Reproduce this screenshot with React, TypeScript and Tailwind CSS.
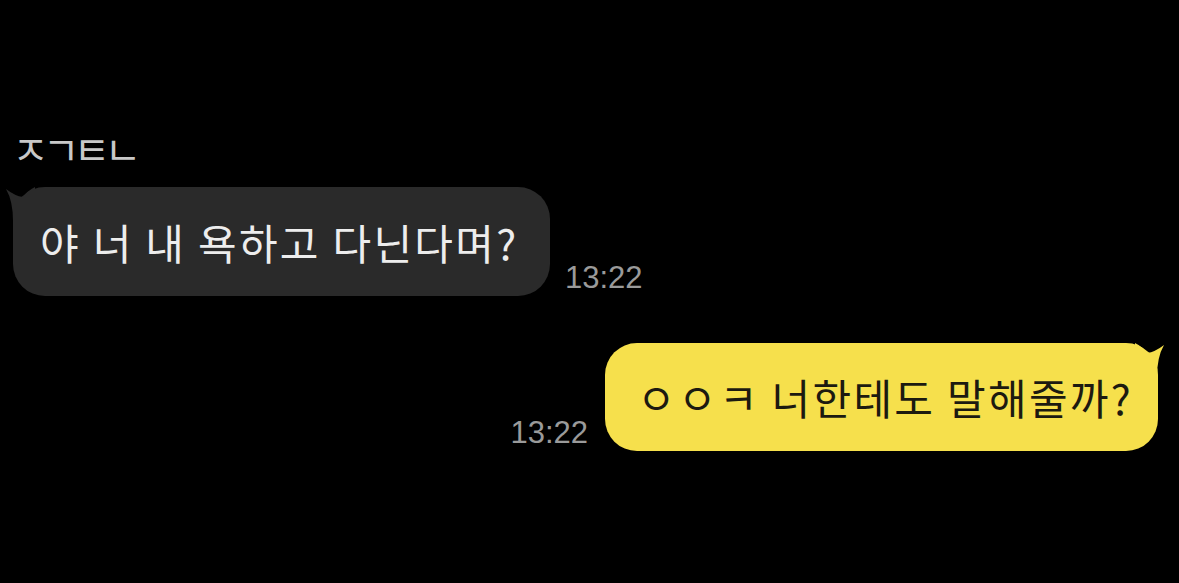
import React from 'react';

const font = { fontFamily: '"Noto Sans CJK KR", "Noto Sans", sans-serif' };

// 말풍선 꼬리 (왼쪽 위)
const TailLeft = ({ color }: { color: string }) => (
  <svg className="absolute -left-[8px] top-0" width="30" height="34" viewBox="0 0 30 34">
    <path d="M1 2 Q10 9 18 10 Q22 4 30 0 L30 34 L8 34 Q8 14 1 2 Z" fill={color} />
  </svg>
);

// 말풍선 꼬리 (오른쪽 위)
const TailRight = ({ color }: { color: string }) => (
  <svg className="absolute -right-[7px] top-0" width="30" height="34" viewBox="0 0 30 34">
    <path d="M29 2 Q20 9 12 10 Q8 4 0 0 L0 34 L22 34 Q22 14 29 2 Z" fill={color} />
  </svg>
);

export default function App() {
  return (
    <div className="h-[583px] w-full bg-black overflow-hidden" style={font}>
      <div className="h-[187px] pl-[12px] flex items-start">
        <div className="mt-[128px] h-[40px] text-[40px] leading-[40px] tracking-[-6px] text-[#c8c8c8]">ㅈㄱㅌㄴ</div>
      </div>

      {/* 받은 메시지 */}
      <div className="pl-[13px] flex items-end gap-[15px]">
        <div className="relative h-[109px] w-[537px] rounded-[32px] bg-[#2a2a2a] flex items-center pl-[27px]">
          <TailLeft color="#2a2a2a" />
          <span className="relative text-[42px] leading-none tracking-[2.3px] text-[#ededed]">야 너 내 욕하고 다닌다며?</span>
        </div>
        <div
          className="pb-[3px] text-[31px] leading-none text-[#9a9a9a]"
          style={{ fontFamily: '"Liberation Sans", sans-serif' }}
        >
          13:22
        </div>
      </div>

      {/* 보낸 메시지 */}
      <div className="mt-[47px] pr-[21px] flex items-end justify-end gap-[17px]">
        <div
          className="pb-[3px] text-[31px] leading-none text-[#9a9a9a]"
          style={{ fontFamily: '"Liberation Sans", sans-serif' }}
        >
          13:22
        </div>
        <div className="relative h-[108px] w-[553px] rounded-[32px] bg-[#f6e04c] flex items-center pl-[32px]">
          <TailRight color="#f6e04c" />
          <span className="relative text-[42px] leading-none tracking-[2.3px] text-[#1c1a10]">ㅇㅇㅋ 너한테도 말해줄까?</span>
        </div>
      </div>
    </div>
  );
}
